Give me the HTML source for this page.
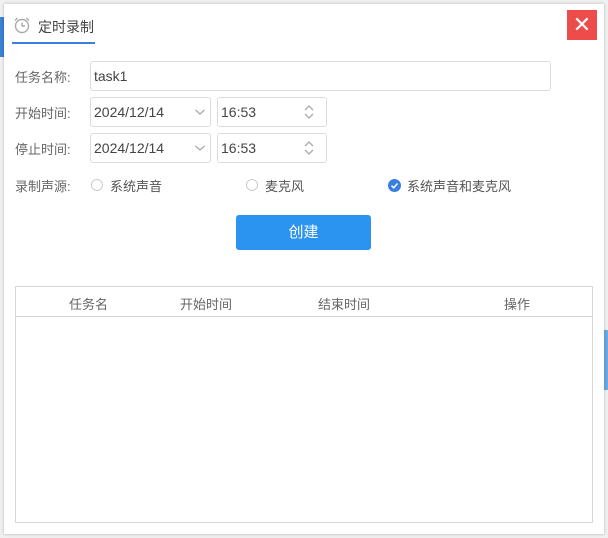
<!DOCTYPE html>
<html><head><meta charset="utf-8"><style>
*{margin:0;padding:0;box-sizing:border-box}
body{width:608px;height:538px;background:#f0f0f0;position:relative;overflow:hidden;font-family:"Liberation Sans","Noto Sans CJK SC",sans-serif;color:#555;font-size:13px}
.bgl{position:absolute;left:0;top:17px;width:4px;height:40px;background:#3b82d6}
.bgr{position:absolute;right:0;top:330px;width:4px;height:60px;background:#6aa8e6}
.dlg{position:absolute;left:4px;top:4px;width:600px;height:530px;background:#fff;box-shadow:0 0 3px rgba(0,0,0,.25)}
.abs{position:absolute}
.lbl{position:absolute;left:11px;font-size:13px;color:#666}
.inp{position:absolute;border:1px solid #dcdcdc;border-radius:3px;background:#fff;font-size:14px;color:#444;padding-left:3px;line-height:28px;height:30px}
.radio{position:absolute;width:12px;height:12px;border:1px solid #ccc;border-radius:50%}
.rl{position:absolute;font-size:13px;color:#555}
</style></head><body>
<div class="bgl"></div><div class="bgr"></div>
<div class="dlg">
  <svg class="abs" style="left:9px;top:12px" width="18" height="18" viewBox="0 0 18 18" fill="none" stroke="#aaa" stroke-width="1.4"><circle cx="9" cy="10" r="6.5"/><path d="M9 6.5V10H12"/><path d="M2 4.5L4.5 2M16 4.5L13.5 2"/></svg>
  <div class="abs" style="left:34px;top:13px;font-size:14px;color:#444">定时录制</div>
  <div class="abs" style="left:8px;top:38px;width:83px;height:2px;background:#3a7fe0"></div>
  <div class="abs" style="left:563px;top:6px;width:30px;height:30px;background:#ee4b4b;color:#fff;text-align:center;line-height:30px;font-size:22px">✕</div>

  <div class="lbl" style="top:63px">任务名称:</div>
  <div class="inp" style="left:86px;top:57px;width:461px">task1</div>

  <div class="lbl" style="top:99px">开始时间:</div>
  <div class="inp" style="left:86px;top:93px;width:121px">2024/12/14<svg class="abs" style="left:103px;top:10px" width="12" height="8" viewBox="0 0 12 8"><path d="M1.5 2L6 6L10.5 2" stroke="#aaa" stroke-width="1.3" fill="none"/></svg></div>
  <div class="inp" style="left:213px;top:93px;width:110px">16:53<svg class="abs" style="left:85px;top:5px" width="12" height="18" viewBox="0 0 12 18"><path d="M2 7L6 3L10 7M2 11L6 15L10 11" stroke="#aaa" stroke-width="1.3" fill="none"/></svg></div>

  <div class="lbl" style="top:135px">停止时间:</div>
  <div class="inp" style="left:86px;top:129px;width:121px">2024/12/14<svg class="abs" style="left:103px;top:10px" width="12" height="8" viewBox="0 0 12 8"><path d="M1.5 2L6 6L10.5 2" stroke="#aaa" stroke-width="1.3" fill="none"/></svg></div>
  <div class="inp" style="left:213px;top:129px;width:110px">16:53<svg class="abs" style="left:85px;top:5px" width="12" height="18" viewBox="0 0 12 18"><path d="M2 7L6 3L10 7M2 11L6 15L10 11" stroke="#aaa" stroke-width="1.3" fill="none"/></svg></div>

  <div class="lbl" style="top:172px">录制声源:</div>
  <div class="radio" style="left:87px;top:175px"></div><div class="rl" style="left:106px;top:172px">系统声音</div>
  <div class="radio" style="left:242px;top:175px"></div><div class="rl" style="left:261px;top:172px">麦克风</div>
  <svg class="abs" style="left:384px;top:175px" width="13" height="13" viewBox="0 0 13 13"><circle cx="6.5" cy="6.5" r="6.5" fill="#3a7fe0"/><path d="M3.5 6.7L5.7 8.8L9.5 4.5" stroke="#fff" stroke-width="1.5" fill="none"/></svg>
  <div class="rl" style="left:403px;top:172px">系统声音和麦克风</div>

  <div class="abs" style="left:232px;top:211px;width:135px;height:35px;background:#2b93f0;border-radius:3px;color:#fff;font-size:15px;text-align:center;line-height:35px">创建</div>

  <div class="abs" style="left:11px;top:282px;width:578px;height:237px;border:1px solid #d6d6d6">
    <div class="abs" style="left:0;top:0;width:576px;height:30px;border-bottom:1px solid #d6d6d6;color:#666;font-size:13px">
      <span class="abs" style="left:53px;top:7px">任务名</span>
      <span class="abs" style="left:164px;top:7px">开始时间</span>
      <span class="abs" style="left:302px;top:7px">结束时间</span>
      <span class="abs" style="left:488px;top:7px">操作</span>
    </div>
  </div>
</div>
</body></html>
